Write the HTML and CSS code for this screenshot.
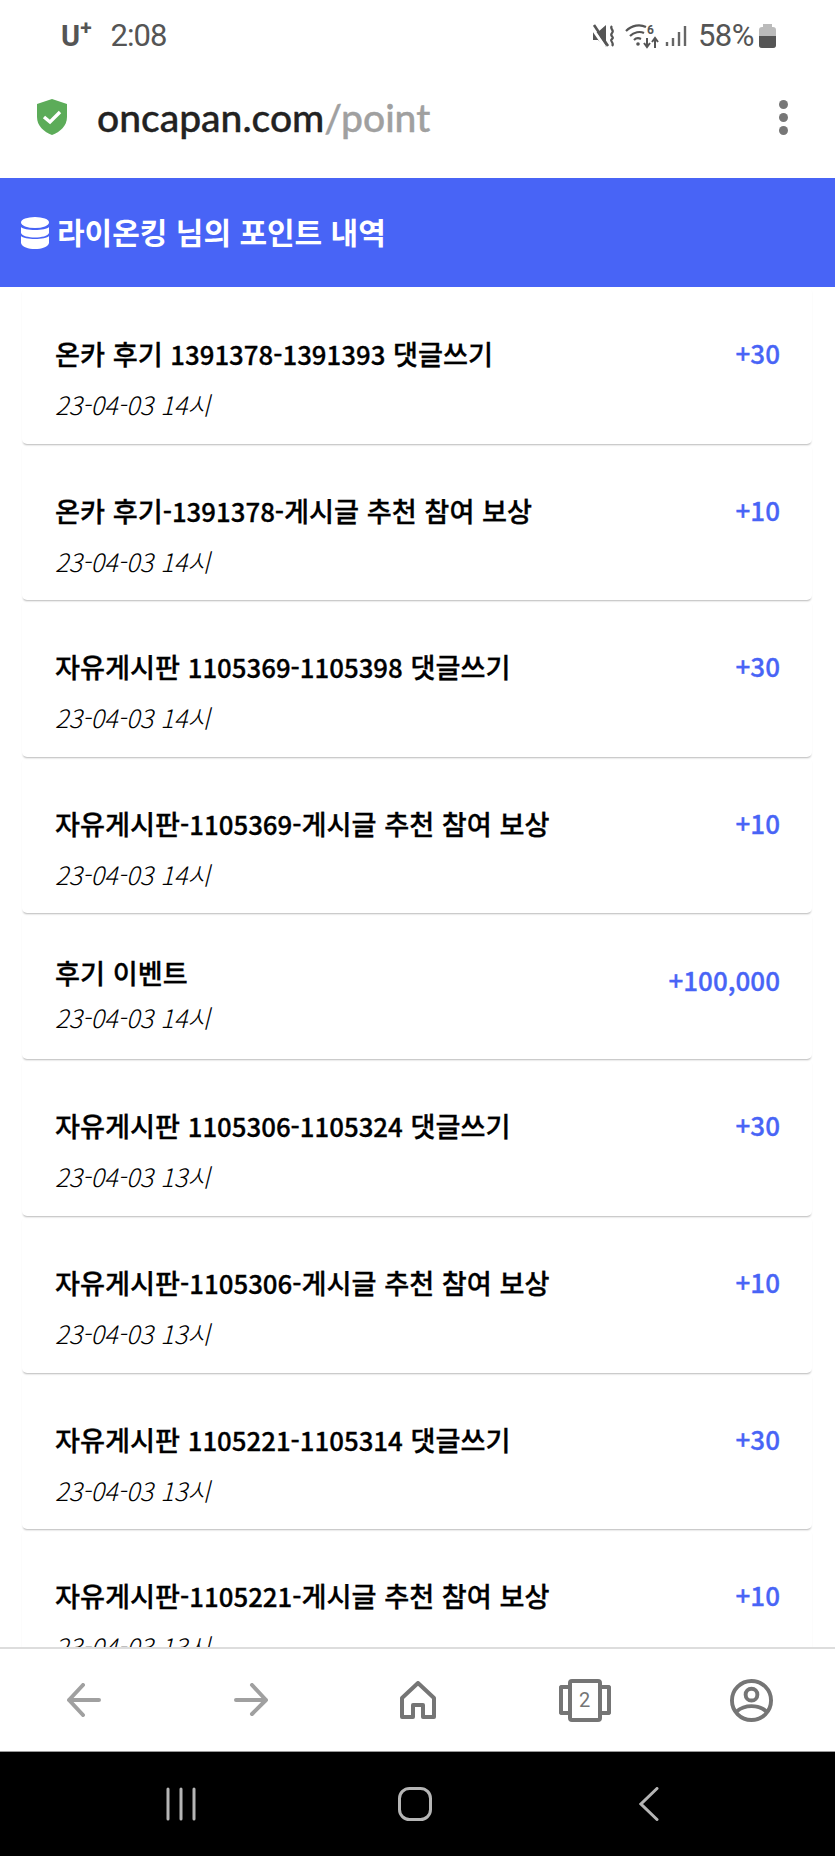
FILE: index.html
```html
<!DOCTYPE html>
<html lang="ko">

<head>
    <meta charset="utf-8">
    <title>포인트 내역</title>
    <link rel="stylesheet" href="styles.css">
</head>

<body>
    <div class="status-bar">
        <div class="status-left">
            <span class="carrier">U<sup>+</sup></span>
            <span class="clock">2:08</span>
        </div>
        <div class="status-right">
            <svg class="icon-mute" viewBox="0 0 24 24" width="24" height="24">
                <path d="M1 8h5l8-7v22l-8-7H1z" fill="#555" />
                <path d="M0 4l13 19" stroke="#fff" stroke-width="3" />
                <path d="M2 1l14 21" stroke="#555" stroke-width="2.6" />
                <path d="M20 2c-3 3 3 4 0 7s3 4 0 6 3 4 0 7" fill="none" stroke="#555" stroke-width="2.2" />
            </svg>
            <svg class="icon-wifi" viewBox="0 0 34 26" width="34" height="26">
                <path d="M1 8c6-6 14-7 20-4M5 13c4-4 10-5 14-3M9 17c2-2 5-2 7-1" fill="none" stroke="#555" stroke-width="2.2" />
                <circle cx="13" cy="21" r="1.8" fill="#555" />
                <path d="M22 23V15M19 20l3 4 3-4M30 25V16M27 19l3-4 3 4" fill="none" stroke="#555" stroke-width="2" />
                <text x="22" y="11" class="wifi-six">6</text>
            </svg>
            <svg class="icon-signal" viewBox="0 0 22 24" width="22" height="24">
                <path d="M2 18v4M8 14v8M14 8v14M20 2v20" stroke="#666" stroke-width="2.4" />
            </svg>
            <span class="battery-text">58%</span>
            <div class="battery">
                <div class="battery-cap"></div>
                <div class="battery-body">
                    <div class="battery-fill"></div>
                </div>
            </div>
        </div>
    </div>

    <div class="url-bar">
        <svg class="shield" viewBox="0 0 30 36" width="30" height="36">
            <path d="M15 0l15 5v13c0 9-7 15-15 18C7 33 0 27 0 18V5z" fill="#5cac59" />
            <path d="M7 18l6 5 10-10" fill="none" stroke="#fff" stroke-width="3.4" />
        </svg>
        <div class="url"><span class="url-host">oncapan.com</span><span class="url-path">/point</span></div>
        <div class="menu-dots"><i></i><i></i><i></i></div>
    </div>

    <header class="page-title">
        <svg class="coins" viewBox="0 0 28 32" width="28" height="32">
            <ellipse cx="14" cy="5.5" rx="14" ry="5.5" fill="#fff" />
            <path d="M0 10c3 4 25 4 28 0v6c-2 6-26 6-28 0zM0 19c3 4 25 4 28 0v7c-2 8-26 8-28 0z" fill="#fff" />
        </svg>
        <h1>라이온킹 님의 포인트 내역</h1>
    </header>

    <main class="list">
        <div class="card">
            <div><div class="card-title">온카 후기 <span class="card-num">1391378-1391393</span> 댓글쓰기</div><div class="card-date">23-04-03 14시</div></div>
            <div class="card-point">+30</div>
        </div>
        <div class="card">
            <div><div class="card-title">온카 후기<span class="card-num">-1391378-</span>게시글 추천 참여 보상</div><div class="card-date">23-04-03 14시</div></div>
            <div class="card-point">+10</div>
        </div>
        <div class="card">
            <div><div class="card-title">자유게시판 <span class="card-num">1105369-1105398</span> 댓글쓰기</div><div class="card-date">23-04-03 14시</div></div>
            <div class="card-point">+30</div>
        </div>
        <div class="card">
            <div><div class="card-title">자유게시판<span class="card-num">-1105369-</span>게시글 추천 참여 보상</div><div class="card-date">23-04-03 14시</div></div>
            <div class="card-point">+10</div>
        </div>
        <div class="card card-short">
            <div><div class="card-title">후기 이벤트</div><div class="card-date">23-04-03 14시</div></div>
            <div class="card-point">+100,000</div>
        </div>
        <div class="card">
            <div><div class="card-title">자유게시판 <span class="card-num">1105306-1105324</span> 댓글쓰기</div><div class="card-date">23-04-03 13시</div></div>
            <div class="card-point">+30</div>
        </div>
        <div class="card">
            <div><div class="card-title">자유게시판<span class="card-num">-1105306-</span>게시글 추천 참여 보상</div><div class="card-date">23-04-03 13시</div></div>
            <div class="card-point">+10</div>
        </div>
        <div class="card">
            <div><div class="card-title">자유게시판 <span class="card-num">1105221-1105314</span> 댓글쓰기</div><div class="card-date">23-04-03 13시</div></div>
            <div class="card-point">+30</div>
        </div>
        <div class="card">
            <div><div class="card-title">자유게시판<span class="card-num">-1105221-</span>게시글 추천 참여 보상</div><div class="card-date">23-04-03 13시</div></div>
            <div class="card-point">+10</div>
        </div>
    </main>

    <nav class="bottom-nav">
        <svg viewBox="0 0 36 34" width="36" height="34">
            <path d="M33 17H3M17 2L3 17l14 15" fill="none" stroke="#a0a0a0" stroke-width="4" stroke-linecap="round" stroke-linejoin="round" />
        </svg>
        <svg viewBox="0 0 36 34" width="36" height="34">
            <path d="M3 17h30M19 2l14 15-14 14" fill="none" stroke="#a0a0a0" stroke-width="4" stroke-linecap="round" stroke-linejoin="round" />
        </svg>
        <svg viewBox="0 0 36 38" width="36" height="38">
            <path d="M18 2L2 17v19h11V24h10v12h11V17z" fill="none" stroke="#757575" stroke-width="4" stroke-linejoin="round" />
        </svg>
        <div class="tabs-icon">
            <span class="tabs-side tabs-left"></span>
            <span class="tabs-count">2</span>
            <span class="tabs-side tabs-right"></span>
        </div>
        <svg viewBox="0 0 44 44" width="43" height="43">
            <circle cx="22" cy="22" r="20" fill="none" stroke="#757575" stroke-width="4" />
            <circle cx="22" cy="16" r="6" fill="none" stroke="#757575" stroke-width="4" />
            <path d="M7 33c8-7 22-7 30 0" fill="none" stroke="#757575" stroke-width="4" />
        </svg>
    </nav>

    <div class="system-nav">
        <svg viewBox="0 0 30 34" width="30" height="34">
            <path d="M2 2v30M15 2v30M28 2v30" stroke="#b5b5b5" stroke-width="3" stroke-linecap="round" />
        </svg>
        <svg viewBox="0 0 34 34" width="34" height="34">
            <rect x="1.5" y="1.5" width="31" height="31" rx="10" fill="none" stroke="#b5b5b5" stroke-width="3" />
        </svg>
        <svg viewBox="0 0 20 34" width="20" height="34">
            <path d="M18 1.500L2 17l16 15.500" fill="none" stroke="#b5b5b5" stroke-width="3" stroke-linecap="round" />
        </svg>
    </div>
</body>

</html>
```

FILE: styles.css
```css
* {
    box-sizing: border-box;
}

body {
    margin: 0;
    width: 835px;
    height: 1856px;
    overflow: hidden;
    display: flex;
    flex-direction: column;
    background: #fff;
    font-family: "Noto Sans CJK KR", "Noto Sans", sans-serif;
}

/* Phone status bar */
.status-bar {
    height: 68px;
    flex: none;
    display: flex;
    justify-content: space-between;
    align-items: center;
    padding: 3px 59px 0 61px;
    color: #555;
    font-family: Roboto, sans-serif;
}

.status-left {
    display: flex;
    align-items: center;
    gap: 19px;
}

.carrier {
    font-size: 29px;
    font-weight: 700;
}

.carrier sup {
    font-size: 21px;
    line-height: 0;
}

.clock {
    font-size: 31px;
    letter-spacing: -1px;
}

.status-right {
    display: flex;
    align-items: center;
    gap: 9px;
}

.icon-signal {
    margin-left: -3px;
}

.wifi-six {
    font-size: 12px;
    fill: #555;
    font-weight: 700;
}

.battery-text {
    font-size: 31px;
    letter-spacing: -0.5px;
    margin-left: 2px;
}

.battery {
    width: 17px;
    margin-left: -4px;
}

.battery-cap {
    width: 9px;
    height: 3px;
    margin: 0 auto;
    background: #bbb;
}

.battery-body {
    height: 21px;
    display: flex;
    align-items: flex-end;
    background: #bbb;
    border-radius: 3px;
    overflow: hidden;
}

.battery-fill {
    width: 100%;
    height: 12px;
    background: #555;
}

/* Browser address bar */
.url-bar {
    height: 110px;
    flex: none;
    display: flex;
    align-items: center;
    padding: 0 47px 12px 37px;
}

.shield {
    flex: none;
    margin-right: 30px;
}

.url {
    flex: 1;
    font-family: Lato, sans-serif;
    font-size: 39px;
    font-weight: 500;
    line-height: 46px;
    -webkit-text-stroke: 0.4px;
}

.url-host {
    color: #222;
}

.url-path {
    color: #a0a0a0;
}

.menu-dots {
    display: flex;
    flex-direction: column;
    gap: 4px;
}

.menu-dots i {
    width: 9px;
    height: 9px;
    border-radius: 50%;
    background: #777;
}

/* Blue page title */
.page-title {
    height: 109px;
    flex: none;
    display: flex;
    align-items: center;
    gap: 8px;
    padding-left: 21px;
    background: #4864f6;
    color: #fff;
}

.page-title h1 {
    margin: 0 0 4px;
    font-size: 30px;
    font-weight: 700;
}

/* Point history */
.list {
    flex: 1;
    min-height: 0;
    overflow: hidden;
    padding: 0 23px 0 22px;
}

.card {
    height: 156.6px;
    display: flex;
    justify-content: space-between;
    padding: 48px 32px 0 33px;
    border-radius: 5px;
    box-shadow: 0 2px 2px -1px rgba(0, 0, 0, 0.28);
}

.card-short {
    height: 146px;
    padding-top: 41px;
}

.card-title {
    color: #000;
    font-size: 27.2px;
    font-weight: 500;
    line-height: 36px;
    -webkit-text-stroke: 0.3px;
}

.card-num {
    font-size: 25.8px;
}

.card-date {
    margin-top: 14px;
    color: #000;
    font-size: 25.3px;
    font-style: italic;
    font-weight: 300;
    line-height: 36px;
}

.card-short .card-date {
    margin-top: 9px;
}

.card-point {
    color: #4864f6;
    font-size: 26px;
    font-weight: 500;
    line-height: 36px;
    -webkit-text-stroke: 0.3px;
}

.card-short .card-point {
    margin-top: 8px;
}

/* Browser bottom toolbar */
.bottom-nav {
    height: 105px;
    flex: none;
    display: grid;
    grid-template-columns: repeat(5, 1fr);
    justify-items: center;
    align-items: center;
    background: #fff;
    border-top: 2px solid #ddd;
    border-bottom: 1px solid #999;
}

.tabs-icon {
    display: flex;
    align-items: center;
    height: 43px;
}

.tabs-side {
    width: 9px;
    height: 30px;
    border: 4px solid #757575;
    border-radius: 3px;
}

.tabs-left {
    border-right: 0;
    border-radius: 3px 0 0 3px;
}

.tabs-right {
    border-left: 0;
    border-radius: 0 3px 3px 0;
}

.tabs-count {
    width: 34px;
    height: 43px;
    border: 4px solid #757575;
    border-radius: 4px;
    color: #757575;
    font-family: Roboto, sans-serif;
    font-size: 20px;
    line-height: 35px;
    text-align: center;
}

/* Android navigation */
.system-nav {
    height: 104px;
    flex: none;
    display: grid;
    grid-template-columns: repeat(3, 1fr);
    justify-items: center;
    align-items: center;
    padding: 0 69px 0 64px;
    background: #000;
}
```
